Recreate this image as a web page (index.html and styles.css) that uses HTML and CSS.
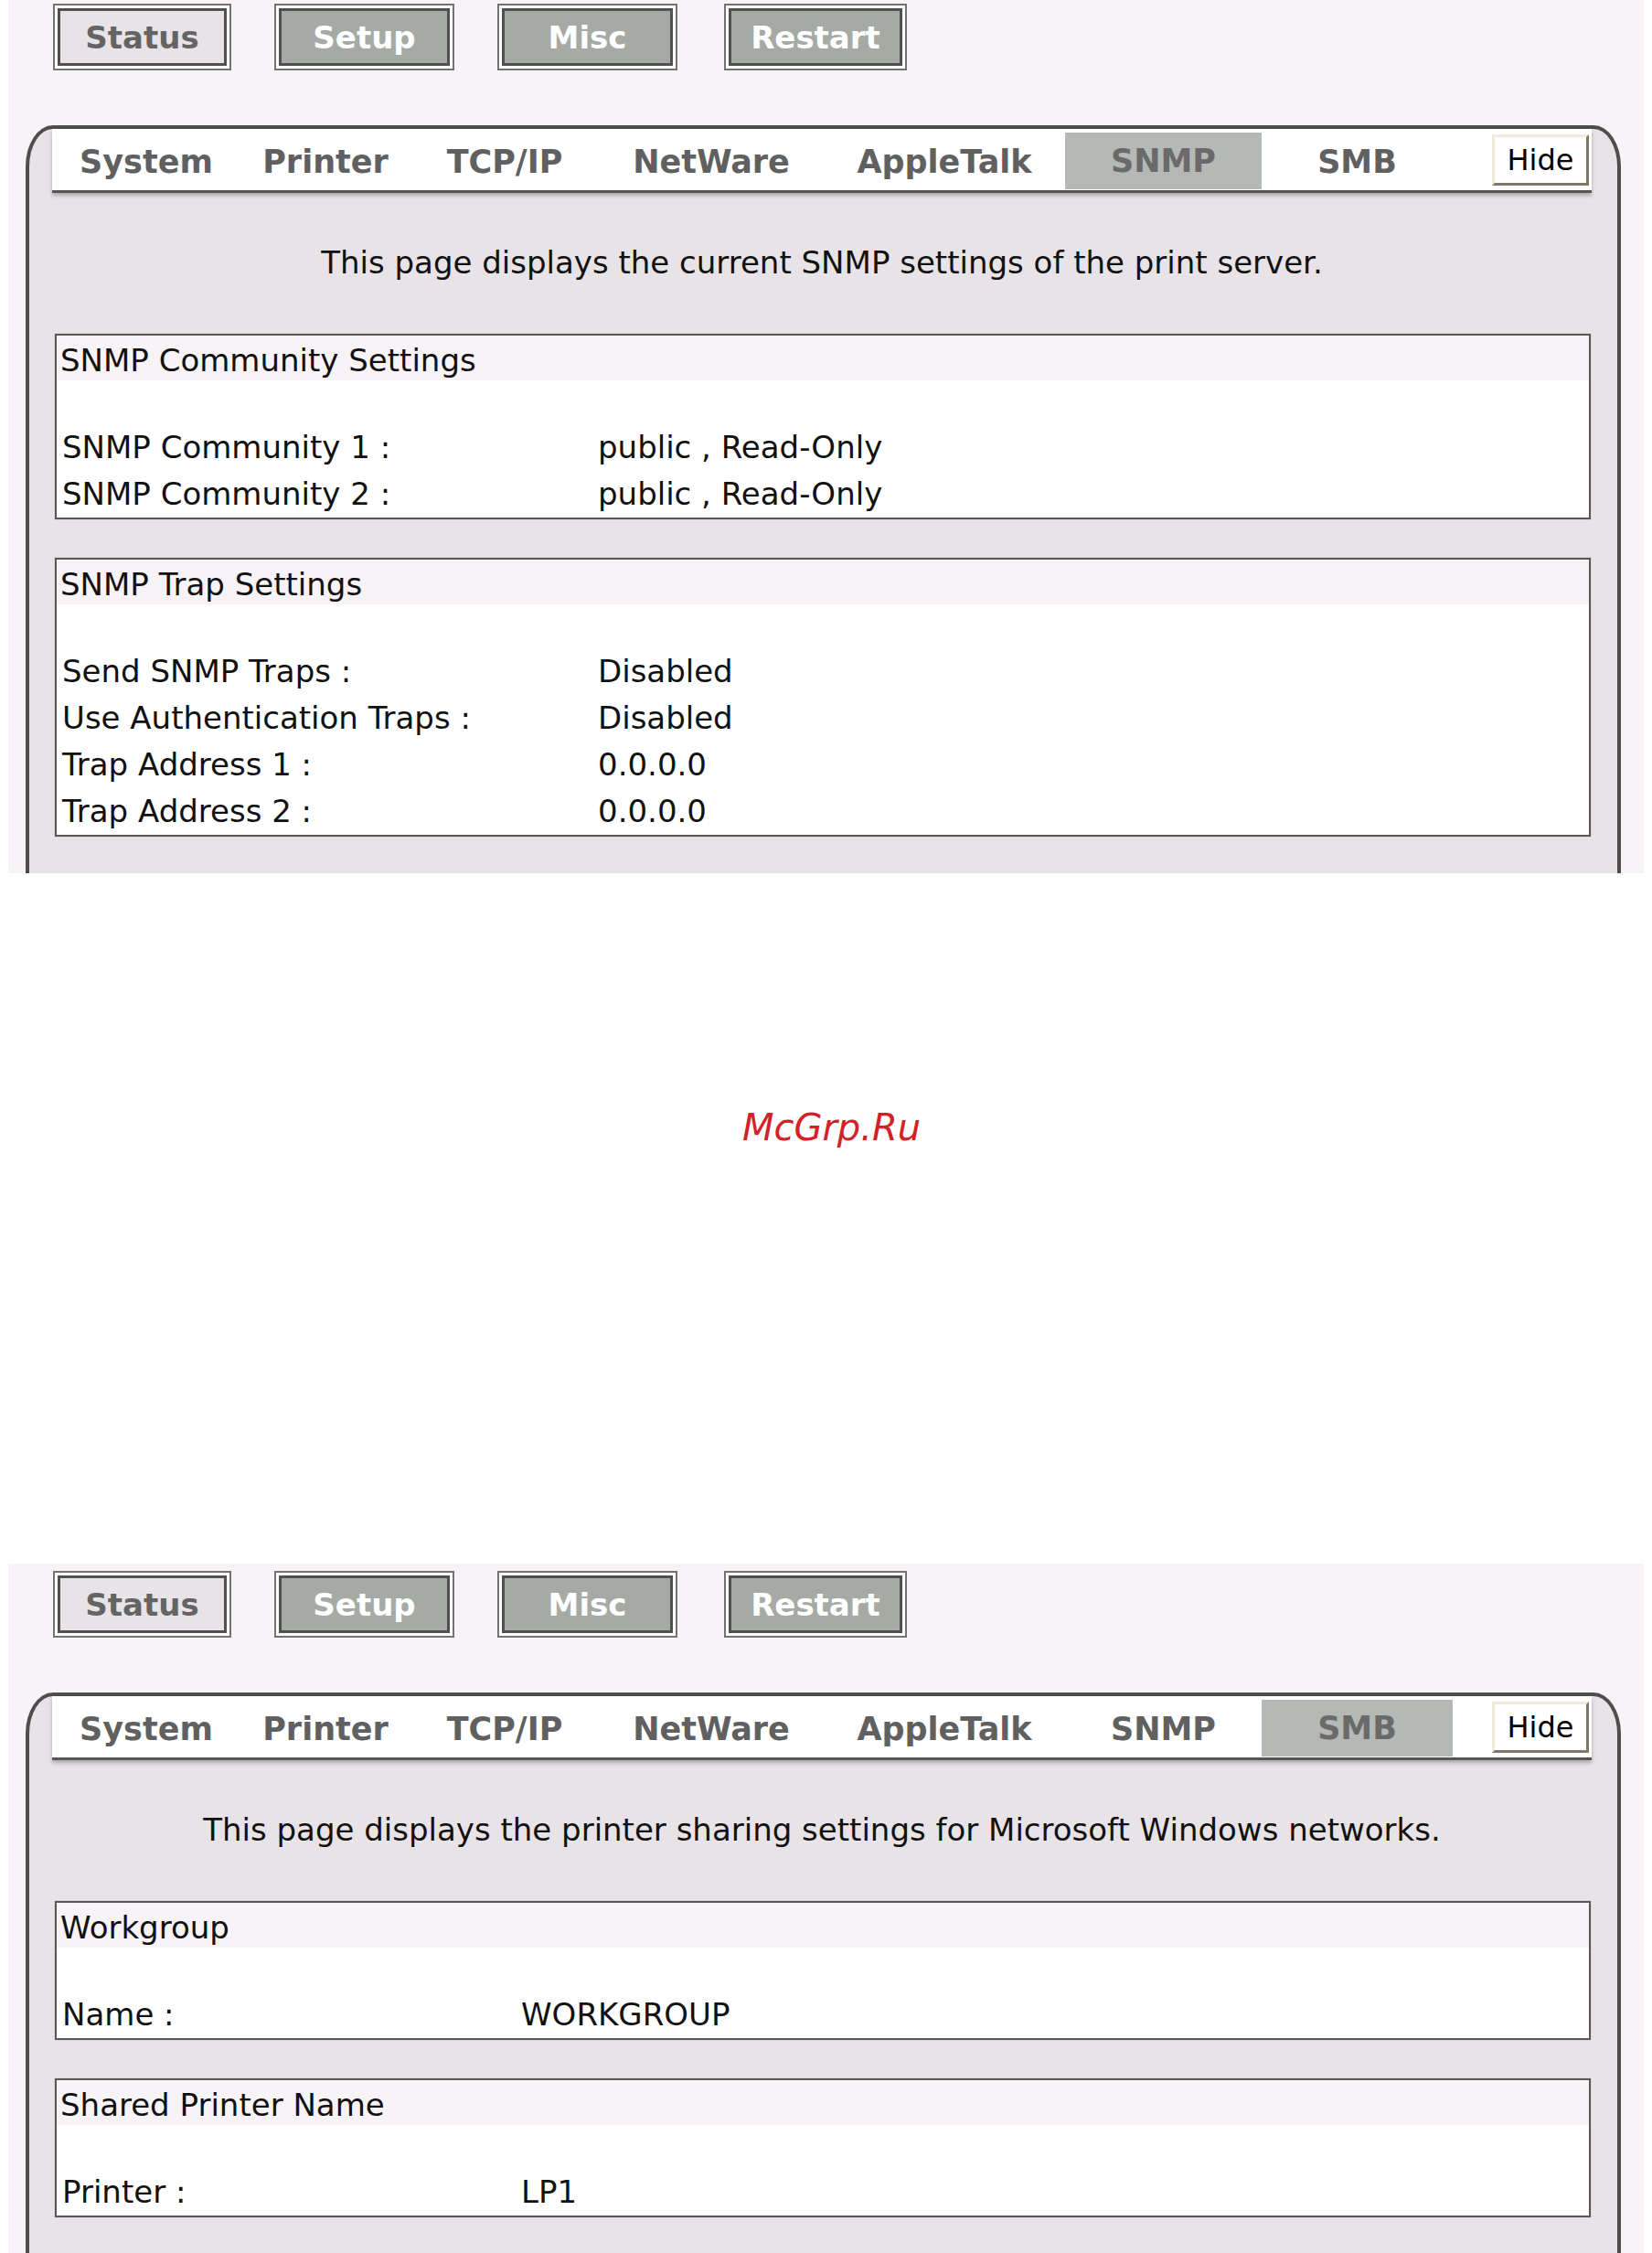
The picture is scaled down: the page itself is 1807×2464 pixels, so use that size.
FILE: index.html
```html
<!DOCTYPE html>
<html lang="en">
<head>
    <meta charset="UTF-8">
    <title>Print Server - SNMP / SMB</title>
    <link rel="stylesheet" href="styles.css">
</head>
<body>

<div class="panel panel-first">
    <div class="nav">
        <div class="nav-btn nav-current">Status</div>
        <div class="nav-btn">Setup</div>
        <div class="nav-btn">Misc</div>
        <div class="nav-btn nav-restart">Restart</div>
    </div>

    <div class="frame">
        <div class="tabs">
            <div class="tab">System</div>
            <div class="tab">Printer</div>
            <div class="tab">TCP/IP</div>
            <div class="tab">NetWare</div>
            <div class="tab">AppleTalk</div>
            <div class="tab tab-active">SNMP</div>
            <div class="tab">SMB</div>
            <div class="hide-btn">Hide</div>
        </div>

        <p class="intro">This page displays the current SNMP settings of the print server.</p>

        <div class="group group-snmp">
            <div class="group-title">SNMP Community Settings</div>
            <div class="group-gap"></div>
            <div class="row"><span>SNMP Community 1 :</span><span>public , Read-Only</span></div>
            <div class="row"><span>SNMP Community 2 :</span><span>public , Read-Only</span></div>
        </div>

        <div class="group group-snmp">
            <div class="group-title">SNMP Trap Settings</div>
            <div class="group-gap"></div>
            <div class="row"><span>Send SNMP Traps :</span><span>Disabled</span></div>
            <div class="row"><span>Use Authentication Traps :</span><span>Disabled</span></div>
            <div class="row"><span>Trap Address 1 :</span><span>0.0.0.0</span></div>
            <div class="row"><span>Trap Address 2 :</span><span>0.0.0.0</span></div>
        </div>
    </div>
</div>

<div class="between">
    <span class="mark">McGrp.Ru</span>
</div>

<div class="panel panel-second">
    <div class="nav">
        <div class="nav-btn nav-current">Status</div>
        <div class="nav-btn">Setup</div>
        <div class="nav-btn">Misc</div>
        <div class="nav-btn nav-restart">Restart</div>
    </div>

    <div class="frame">
        <div class="tabs">
            <div class="tab">System</div>
            <div class="tab">Printer</div>
            <div class="tab">TCP/IP</div>
            <div class="tab">NetWare</div>
            <div class="tab">AppleTalk</div>
            <div class="tab">SNMP</div>
            <div class="tab tab-active">SMB</div>
            <div class="hide-btn">Hide</div>
        </div>

        <p class="intro">This page displays the printer sharing settings for Microsoft Windows networks.</p>

        <div class="group group-smb">
            <div class="group-title">Workgroup</div>
            <div class="group-gap"></div>
            <div class="row"><span>Name :</span><span>WORKGROUP</span></div>
        </div>

        <div class="group group-smb">
            <div class="group-title">Shared Printer Name</div>
            <div class="group-gap"></div>
            <div class="row"><span>Printer :</span><span>LP1</span></div>
        </div>
    </div>
</div>

</body>
</html>
```

FILE: styles.css
```css
body {
    margin: 0;
    background: #ffffff;
    font-family: "DejaVu Sans", Verdana, sans-serif;
    color: #111111;
}
.panel {
    margin: 0 9px;
    background: #f7f3f7;
    overflow: hidden;
    padding-top: 8px;
    box-sizing: border-box;
}
.panel-first {
    margin-top: -4px;
    height: 959px;
}
.panel-second {
    height: 754px;
}

/* top buttons */
.nav {
    display: flex;
    gap: 47px;
    padding-left: 49px;
}
.nav-btn {
    width: 197px;
    height: 73px;
    box-sizing: border-box;
    border: 2px solid #737373;
    box-shadow: inset 0 0 0 3px #ffffff, inset 0 0 0 6px #505050;
    background: #a5aaa5;
    color: #ffffff;
    font-weight: bold;
    font-size: 34px;
    display: flex;
    align-items: center;
    justify-content: center;
}
.nav-current {
    width: 195px;
    background: #e7e3e7;
    color: #646464;
}
.nav-restart {
    width: 200px;
    margin-left: 4px;
}

/* main frame */
.frame {
    margin: 60px 0 0 19px;
    width: 1745px;
    box-sizing: border-box;
    border: 4px solid #4d4d4d;
    border-bottom: none;
    border-radius: 30px 30px 0 0 / 45px 45px 0 0;
    background: #e7e3e7;
    padding: 0 28px 60px 25px;
}
.tabs {
    display: grid;
    grid-template-columns: 206px 186px 206px 246px 264px 215px 209px 1fr;
    height: 67px;
    background: #ffffff;
    border-bottom: 3px solid #555555;
    box-shadow: 0 3px 4px rgba(0, 0, 0, 0.25);
}
.tab {
    display: flex;
    align-items: center;
    justify-content: center;
    padding-top: 4px;
    font-weight: bold;
    font-size: 35px;
    color: #606060;
}
.tab-active {
    background: #b5b9b5;
    margin: 4px 0 1px;
    padding-top: 0;
    color: #6a6a6a;
}
.hide-btn {
    justify-self: end;
    align-self: start;
    margin: 6px 3px 0 0;
    width: 106px;
    height: 56px;
    box-sizing: border-box;
    border: 3px solid;
    border-color: #eeeadc #7d7868 #7d7868 #eeeadc;
    background: #ffffff;
    font-size: 32px;
    color: #000000;
    display: flex;
    align-items: center;
    justify-content: center;
}

.intro {
    margin: 0;
    padding: 56px 0 58px;
    line-height: 40px;
    font-size: 34px;
    text-align: center;
}

/* settings boxes */
.group {
    margin: 0 1px 42px 3px;
    border: 2px solid #585858;
    box-shadow: 0 0 1px #9a9a9a;
    background: #ffffff;
    font-size: 34px;
}
.group-title {
    height: 43px;
    line-height: 43px;
    padding: 6px 0 0 4px;
    background: #f7f3f7;
}
.group-gap {
    height: 48px;
}
.row {
    display: grid;
    height: 51px;
    line-height: 51px;
    padding-left: 6px;
}
.group-snmp .row {
    grid-template-columns: 586px 1fr;
}
.group-smb .row {
    grid-template-columns: 502px 1fr;
}

/* gap between the two screens */
.between {
    height: 755px;
    box-sizing: border-box;
    padding: 253px 0 0 12px;
    text-align: center;
}
.mark {
    font-size: 40px;
    line-height: 50px;
    font-style: italic;
    color: #d42027;
}
```
